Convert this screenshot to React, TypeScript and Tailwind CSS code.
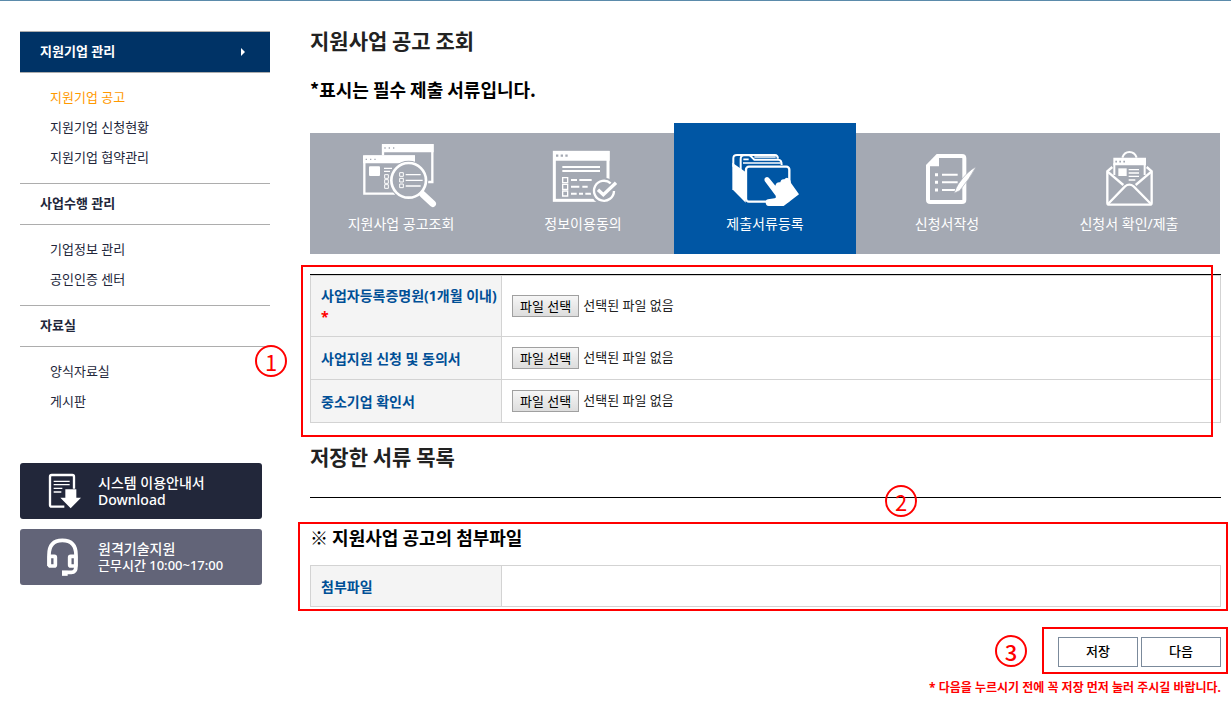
import { useRef, useState } from 'react';
import type { ReactNode } from 'react';

const menu = [
  { title: '지원기업 관리', items: ['지원기업 공고', '지원기업 신청현황', '지원기업 협약관리'] },
  { title: '사업수행 관리', items: ['기업정보 관리', '공인인증 센터'] },
  { title: '자료실', items: ['양식자료실', '게시판'] },
];

const documents = [
  { id: 'doc-license', name: '사업자등록증명원(1개월 이내)', required: true },
  { id: 'doc-consent', name: '사업지원 신청 및 동의서', required: false },
  { id: 'doc-sme', name: '중소기업 확인서', required: false },
];

function SearchIcon() {
  return (
    <svg viewBox="183 432 240 192" className="w-20 h-16" fill="none" stroke="white" aria-hidden="true">
      {/* back window */}
      <path d="M249 466V436H397V546H380" strokeWidth="7" />
      <path d="M246 432H401V457H246z" fill="white" stroke="none" />
      {/* front window */}
      <path d="M193 470H341V500M193 470V581H285" strokeWidth="7" />
      <path d="M189 466H345V490H189z" fill="white" stroke="none" />
      <path d="M253 444h4M266 444h4M279 444h4M197 478h4M210 478h4M223 478h4" stroke="#a4a9b3" strokeWidth="4" />
      <rect x="207" y="499" width="33" height="29" rx="3" fill="white" stroke="none" />
      <path d="M252 505H276M252 514H270" strokeWidth="4" />
      <path d="M254 524h11v11h-11zM254 539h11v11h-11zM254 554h11v11h-11z" strokeWidth="3" />
      {/* lens */}
      <circle cx="326" cy="541" r="59" fill="#a4a9b3" stroke="none" />
      <circle cx="326" cy="541" r="52" strokeWidth="8" />
      <path d="M299 518h11v11h-11zM299 535h11v11h-11zM299 552h11v11h-11z" strokeWidth="3" />
      <path d="M317 524H362M317 541H368M317 558H362" strokeWidth="4" />
      <path d="M368 583L398 611" strokeWidth="20" strokeLinecap="round" />
    </svg>
  );
}

function AgreeIcon() {
  return (
    <svg viewBox="99 102 240 192" className="w-20 h-16" fill="none" stroke="white" aria-hidden="true">
      <rect x="133" y="127" width="161" height="144" strokeWidth="9" />
      <path d="M129 123H299V152H129z" fill="white" stroke="none" />
      <path d="M138 137h7M152 137h7M166 137h7" stroke="#a4a9b3" strokeWidth="7" />
      <path d="M157 171H270M157 183H270" strokeWidth="6" />
      <path d="M158 203h15v15h-15zM158 223h15v15h-15zM158 243h15v15h-15z" strokeWidth="4" />
      <path d="M183 210H201M208 210H245M183 230H208M217 230H233M183 251H200M207 251H219M226 251H244" strokeWidth="6" />
      <circle cx="282" cy="243" r="40" fill="#a4a9b3" stroke="none" />
      <path d="M302 220A30 30 0 1 0 312 243" strokeWidth="7" />
      <path d="M264 239L280 254L318 218" strokeWidth="10" />
    </svg>
  );
}

function FolderIcon() {
  return (
    <svg viewBox="645 102 240 192" className="w-20 h-16" fill="none" stroke="white" aria-hidden="true">
      <path d="M670 170V145Q670 135 681 135H795Q803 135 804 146" strokeWidth="6" />
      <path d="M692 180V147Q692 136 702 136H716Q722 136 726 142L733 149H805Q815 149 815 165" strokeWidth="6" />
      <path d="M733 141H797M700 148H716M699 159H812" strokeWidth="5" />
      <path d="M667 158L707 186V278L667 238z" fill="white" stroke="none" />
      <rect x="708" y="170" width="130" height="105" rx="9" fill="#0056a4" strokeWidth="7" />
      <path
        d="M764 213Q761 203 771 201Q776 201 779 206L796 227Q799 215 811 217Q813 206 823 208Q830 198 839 208Q842 212 843 219L867 253L821 288H776Q767 288 767 277Q767 267 779 267L794 265Q800 263 797 257z"
        fill="white"
        stroke="none"
      />
    </svg>
  );
}

function WriteIcon() {
  return (
    <svg viewBox="141 102 240 192" className="w-20 h-16" fill="none" stroke="white" aria-hidden="true">
      <path d="M234 138H306Q313 138 313 145V269Q313 276 306 276H211Q204 276 204 269V166" strokeWidth="12" />
      <path d="M230 132H237V169H198V165z" fill="white" stroke="none" />
      <path d="M225 194h9M225 217h9M225 240h9" strokeWidth="9" />
      <path d="M246 194H293M246 217H293M246 240H285" strokeWidth="6" />
      <path d="M348 170Q322 183 295 222L289 233L282 250L299 242Q330 205 348 170z" fill="white" stroke="#a4a9b3" strokeWidth="2" />
    </svg>
  );
}

function MailIcon() {
  return (
    <svg viewBox="687 102 240 192" className="w-20 h-16" fill="none" stroke="white" aria-hidden="true">
      <path d="M787 143Q793 126 808 126Q824 126 830 143" strokeWidth="6" />
      <path d="M763 160V195M854 160V195" strokeWidth="6" />
      <path d="M760 143H858V166H760z" fill="white" stroke="none" />
      <path d="M766 155h5M778 155h5M790 155h5" stroke="#a4a9b3" strokeWidth="5" />
      <path d="M775 175H800V198H775z" fill="white" stroke="none" />
      <path d="M806 179H837M806 189H837M806 199H837M806 210H826" strokeWidth="4" />
      <path d="M757 171L742 184V278Q742 284 748 284H869Q875 284 875 278V184L860 171" strokeWidth="7" />
      <path d="M742 184L790 225M875 184L827 225M744 282L795 229Q808 219 821 229L873 282" strokeWidth="7" />
    </svg>
  );
}

function DownloadIcon() {
  return (
    <svg viewBox="141 93 108 120" className="w-9 h-10 shrink-0" fill="none" stroke="white" aria-hidden="true">
      <path d="M222 146V110Q222 105 217 105H155Q150 105 150 110V195Q150 200 155 200H193" strokeWidth="7" />
      <path d="M161 124H209M161 134H209M161 145H187M161 156H184" strokeWidth="4" />
      <path d="M196 148H229V173H243L212 205L181 173H196z" fill="white" stroke="none" />
    </svg>
  );
}

function HeadsetIcon() {
  return (
    <svg viewBox="141 291 108 120" className="w-9 h-10 shrink-0" fill="none" stroke="white" aria-hidden="true">
      <path d="M147 378V345Q147 301 187 301Q228 301 228 345V378Q228 397 214 397H186" strokeWidth="11" />
      <path d="M186 400H203" strokeWidth="15" />
      <rect x="148" y="349" width="18" height="29" rx="3" strokeWidth="11" />
      <rect x="209" y="349" width="18" height="29" rx="3" strokeWidth="11" />
    </svg>
  );
}

const steps = [
  { label: '지원사업 공고조회', icon: <SearchIcon /> },
  { label: '정보이용동의', icon: <AgreeIcon /> },
  { label: '제출서류등록', icon: <FolderIcon />, active: true },
  { label: '신청서작성', icon: <WriteIcon /> },
  { label: '신청서 확인/제출', icon: <MailIcon /> },
];

// Red numbered marker used by the manual
function Marker({ n, className }: { n: number; className: string }) {
  return (
    <span
      className={`absolute w-8 h-8 rounded-full border-2 border-[#ff0000] text-[#ff0000] text-[22px] font-['Noto_Sans_CJK_KR',sans-serif] flex items-center justify-center pointer-events-none ${className}`}
    >
      {n}
    </span>
  );
}

function Outline({ className }: { className: string }) {
  return <div className={`absolute border-2 border-[#ff0000] pointer-events-none ${className}`} />;
}

function FilePicker({ id }: { id: string }) {
  const input = useRef<HTMLInputElement>(null);
  const [name, setName] = useState('');

  return (
    <div className="flex items-center gap-1 h-6 text-[13px] text-[#222222]">
      <button
        type="button"
        onClick={() => input.current?.click()}
        className="h-[22px] px-[7px] border border-[#a0a0a0] bg-gradient-to-b from-[#f6f6f6] to-[#dddddd] text-black leading-5"
      >
        파일 선택
      </button>
      <input ref={input} id={id} type="file" className="hidden" onChange={(e) => setName(e.target.files?.[0]?.name ?? '')} />
      <span>{name || '선택된 파일 없음'}</span>
    </div>
  );
}

function Row({ head, children }: { head: ReactNode; children?: ReactNode }) {
  return (
    <tr className="h-[41px]">
      <th scope="row" className="w-[191px] border border-[#d3d3d3] bg-[#f4f4f4] pl-[10px] pr-1 py-[9px] text-left text-[14px] leading-[21px] font-bold text-[#004f96] whitespace-nowrap">
        {head}
      </th>
      <td className="border border-[#d3d3d3] px-[10px] py-[9px]">{children}</td>
    </tr>
  );
}

export default function App() {
  return (
    <div className="border-t border-[#5b8bab] bg-white flex font-['Noto_Sans','Noto_Sans_CJK_KR',sans-serif] text-black">
      <aside className="w-[250px] shrink-0 ml-5 mt-[30px]">
        <nav>
          {menu.map((group, i) => (
            <div key={group.title}>
              <h2
                className={`h-[42px] px-5 border-y border-[#adadad] flex items-center justify-between text-[13px] font-bold ${
                  i === 0 ? 'bg-[#003366] text-white' : 'text-[#22263a]'
                }`}
              >
                {group.title}
                {i === 0 && (
                  <svg viewBox="0 0 10 8" className="w-[10px] h-2" fill="white" aria-hidden="true">
                    <path d="M1 0L5 4L1 8z" />
                  </svg>
                )}
              </h2>
              <ul className="pt-[9px] pb-[11px] pl-[30px] text-[13px] leading-[30px]">
                {group.items.map((item, j) => (
                  <li key={item}>
                    <a href="#" className={i === 0 && j === 0 ? 'text-[#ff9900]' : 'text-[#22263a]'}>
                      {item}
                    </a>
                  </li>
                ))}
              </ul>
            </div>
          ))}
        </nav>

        <div className="w-[242px] mt-9 flex flex-col gap-[10px] text-white text-[14px] leading-[17px] font-medium">
          <a href="#" className="h-14 rounded-[3px] bg-[#22273a] pl-[27px] flex items-center gap-[15px]">
            <DownloadIcon />
            <span>
              <span className="block">시스템 이용안내서</span>
              <span className="block">Download</span>
            </span>
          </a>
          <a href="#" className="h-14 rounded-[3px] bg-[#626478] pl-[27px] flex items-center gap-[15px]">
            <HeadsetIcon />
            <span>
              <span className="block">원격기술지원</span>
              <span className="block text-[13px]">근무시간 10:00~17:00</span>
            </span>
          </a>
        </div>
      </aside>

      <main className="flex-1 ml-10 mr-[10px] pt-6">
        <h1 className="text-[21px] leading-[30px] font-bold font-['Noto_Sans_CJK_KR',sans-serif] text-[#222222]">지원사업 공고 조회</h1>
        <p className="mt-[22px] text-[18px] leading-6 font-bold font-['Noto_Sans_CJK_KR',sans-serif]">*표시는 필수 제출 서류입니다.</p>

        {/* Steps */}
        <ol className="mt-8 mr-px flex h-[121px] bg-[#a4a9b3] text-white text-[14px]">
          {steps.map((step) => (
            <li
              key={step.label}
              aria-current={step.active ? 'step' : undefined}
              className={`flex-1 flex flex-col items-center ${step.active ? '-mt-[10px] pt-[21px] bg-[#0056a4]' : 'pt-[11px]'}`}
            >
              {step.icon}
              <span className="mt-1 leading-6">{step.label}</span>
            </li>
          ))}
        </ol>

        {/* Required documents */}
        <section className="relative mt-5 border-t border-black">
          <table className="w-full border-collapse">
            <tbody>
              {documents.map((doc) => (
                <Row
                  key={doc.id}
                  head={
                    <label htmlFor={doc.id}>
                      {doc.name}
                      {doc.required && <span className="block text-[#ff0000]">*</span>}
                    </label>
                  }
                >
                  <FilePicker id={doc.id} />
                </Row>
              ))}
            </tbody>
          </table>
          <Outline className="-left-[9px] right-2 -top-[10px] -bottom-[14px]" />
          <Marker n={1} className="-left-[55px] top-[70px]" />
        </section>

        <h2 className="mt-[18px] text-[21px] leading-[30px] font-bold font-['Noto_Sans_CJK_KR',sans-serif] text-[#222222]">저장한 서류 목록</h2>
        <hr className="mt-[26px] border-black" />

        {/* Attachments */}
        <section className="relative mt-[27px]">
          <h3 className="text-[18px] leading-6 font-bold font-['Noto_Sans_CJK_KR',sans-serif]">※ 지원사업 공고의 첨부파일</h3>
          <table className="mt-4 w-full border-collapse">
            <tbody>
              <Row head="첨부파일" />
            </tbody>
          </table>
          <Outline className="-left-3 -right-[7px] -top-[3px] -bottom-1" />
          <Marker n={2} className="right-[304px] -top-10" />
        </section>

        <div className="relative mt-[30px] flex justify-end gap-[3px] text-[13px] font-medium">
          <button type="button" className="w-20 h-[30px] border border-[#7b8a9b] bg-white">
            저장
          </button>
          <button type="button" className="w-20 h-[30px] border border-[#7b8a9b] bg-white">
            다음
          </button>
          <Outline className="w-[186px] -right-[7px] -top-[10px] -bottom-[7px]" />
          <Marker n={3} className="right-[194px] -top-0.5" />
        </div>
        <p className="mt-3 text-right text-[12px] leading-[18px] font-bold text-[#ff0000]">
          * 다음을 누르시기 전에 꼭 저장 먼저 눌러 주시길 바랍니다.
        </p>
      </main>
    </div>
  );
}
